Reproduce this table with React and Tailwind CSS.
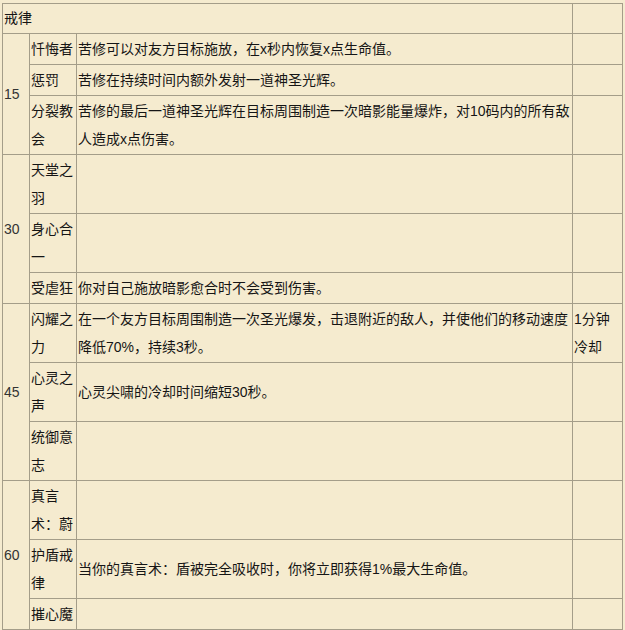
export default function App() {
  const b = "border border-[#a49d89] p-px align-middle";
  const groups = [
    {
      level: "15",
      rows: [
        ["忏悔者", "苦修可以对友方目标施放，在x秒内恢复x点生命值。", ""],
        ["惩罚", "苦修在持续时间内额外发射一道神圣光辉。", ""],
        ["分裂教会", "苦修的最后一道神圣光辉在目标周围制造一次暗影能量爆炸，对10码内的所有敌人造成x点伤害。", ""],
      ],
    },
    {
      level: "30",
      rows: [
        ["天堂之羽", "", ""],
        ["身心合一", "", ""],
        ["受虐狂", "你对自己施放暗影愈合时不会受到伤害。", ""],
      ],
    },
    {
      level: "45",
      rows: [
        ["闪耀之力", "在一个友方目标周围制造一次圣光爆发，击退附近的敌人，并使他们的移动速度降低70%，持续3秒。", "1分钟冷却"],
        ["心灵之声", "心灵尖啸的冷却时间缩短30秒。", ""],
        ["统御意志", "", ""],
      ],
    },
    {
      level: "60",
      rows: [
        ["真言术：蔚", "", ""],
        ["护盾戒律", "当你的真言术：盾被完全吸收时，你将立即获得1%最大生命值。", ""],
        ["摧心魔", "", ""],
      ],
    },
  ];
  return (
    <div
      className="w-[625px] h-[630px] overflow-hidden bg-[#f5ebcf] pt-[3px] pl-[2px] text-[14px] leading-[28px] text-[#151515]"
      style={{ fontFamily: '"Liberation Sans", "Noto Sans CJK SC", sans-serif' }}
    >
      <table className="border-collapse table-fixed w-[620px]">
        <colgroup>
          <col className="w-[27px]" />
          <col className="w-[47px]" />
          <col className="w-[496px]" />
          <col className="w-[50px]" />
        </colgroup>
        <tbody>
          <tr>
            <td colSpan={3} className={b + " leading-[27px]"}>戒律</td>
            <td className={b}></td>
          </tr>
          {groups.map((g) =>
            g.rows.map((r, i) => (
              <tr key={g.level + i}>
                {i === 0 && (
                  <td rowSpan={g.rows.length} className={b + " text-[#333]"}>
                    {g.level}
                  </td>
                )}
                <td className={b + " align-top"}>{r[0]}</td>
                <td className={b}>{r[1]}</td>
                <td className={b + " align-top"}>{r[2]}</td>
              </tr>
            ))
          )}
        </tbody>
      </table>
    </div>
  );
}
